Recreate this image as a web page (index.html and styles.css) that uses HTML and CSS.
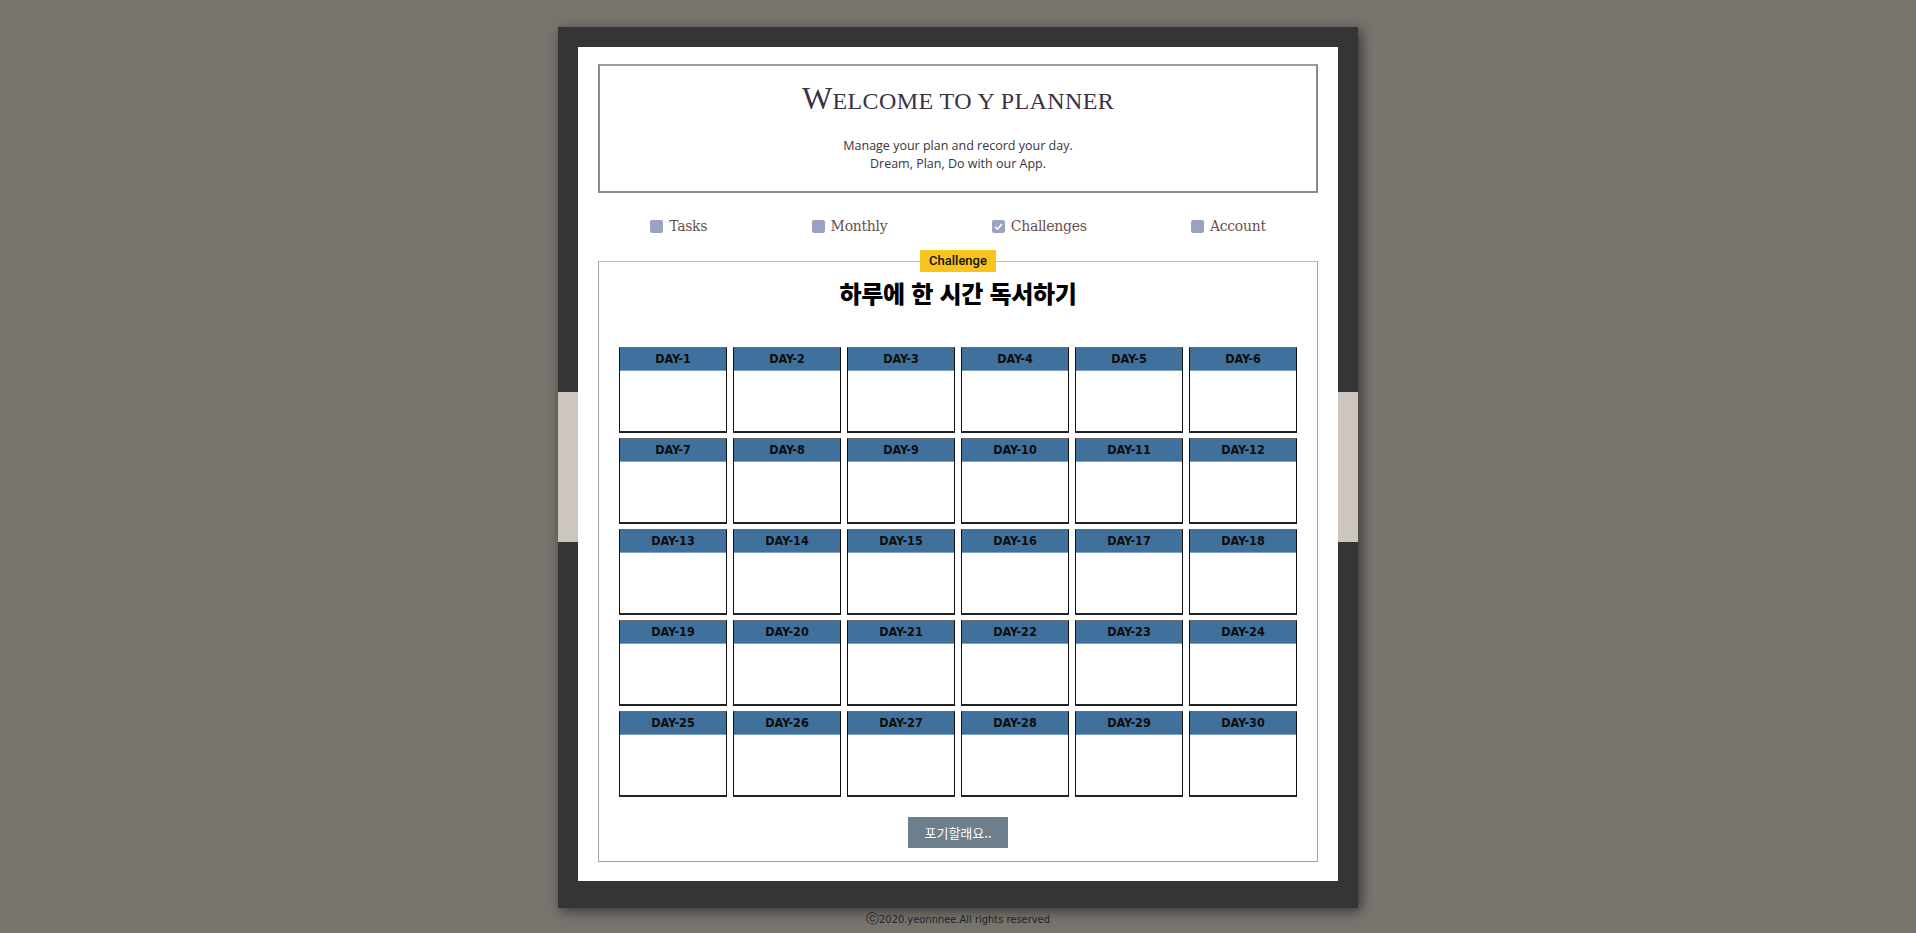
FILE: index.html
```html
<!DOCTYPE html>
<html lang="ko">
<head>
<meta charset="utf-8">
<title>Y Planner - Challenge</title>
<link rel="stylesheet" href="styles.css">
</head>
<body>
<div class="frame">
  <div class="paper">
    <header class="intro">
      <h1 class="intro-title">Welcome to Y planner</h1>
      <p class="intro-text">Manage your plan and record your day.<br>Dream, Plan, Do with our App.</p>
    </header>
    <nav class="menu">
      <label class="menu-item"><span class="box"></span>Tasks</label>
      <label class="menu-item"><span class="box"></span>Monthly</label>
      <label class="menu-item"><span class="box checked"><svg viewBox="0 0 13 13" width="13" height="13"><path d="M3 6.8 L5.4 9.2 L10 4" fill="none" stroke="#fff" stroke-width="1.6"/></svg></span>Challenges</label>
      <label class="menu-item"><span class="box"></span>Account</label>
    </nav>
    <fieldset class="challenge">
      <legend class="challenge-tag">Challenge</legend>
      <h2 class="challenge-title">하루에 한 시간 독서하기</h2>
      <div class="days">
        <div class="day"><div class="day-head">DAY-1</div></div>
        <div class="day"><div class="day-head">DAY-2</div></div>
        <div class="day"><div class="day-head">DAY-3</div></div>
        <div class="day"><div class="day-head">DAY-4</div></div>
        <div class="day"><div class="day-head">DAY-5</div></div>
        <div class="day"><div class="day-head">DAY-6</div></div>
        <div class="day"><div class="day-head">DAY-7</div></div>
        <div class="day"><div class="day-head">DAY-8</div></div>
        <div class="day"><div class="day-head">DAY-9</div></div>
        <div class="day"><div class="day-head">DAY-10</div></div>
        <div class="day"><div class="day-head">DAY-11</div></div>
        <div class="day"><div class="day-head">DAY-12</div></div>
        <div class="day"><div class="day-head">DAY-13</div></div>
        <div class="day"><div class="day-head">DAY-14</div></div>
        <div class="day"><div class="day-head">DAY-15</div></div>
        <div class="day"><div class="day-head">DAY-16</div></div>
        <div class="day"><div class="day-head">DAY-17</div></div>
        <div class="day"><div class="day-head">DAY-18</div></div>
        <div class="day"><div class="day-head">DAY-19</div></div>
        <div class="day"><div class="day-head">DAY-20</div></div>
        <div class="day"><div class="day-head">DAY-21</div></div>
        <div class="day"><div class="day-head">DAY-22</div></div>
        <div class="day"><div class="day-head">DAY-23</div></div>
        <div class="day"><div class="day-head">DAY-24</div></div>
        <div class="day"><div class="day-head">DAY-25</div></div>
        <div class="day"><div class="day-head">DAY-26</div></div>
        <div class="day"><div class="day-head">DAY-27</div></div>
        <div class="day"><div class="day-head">DAY-28</div></div>
        <div class="day"><div class="day-head">DAY-29</div></div>
        <div class="day"><div class="day-head">DAY-30</div></div>
      </div>
      <div class="actions"><button class="giveup">포기할래요..</button></div>
    </fieldset>
  </div>
</div>
<footer class="footer"><span class="copy">ⓒ</span>2020.yeonnnee.All rights reserved</footer>
</body>
</html>
```

FILE: styles.css
```css
html, body {
  margin: 0;
  padding: 0;
}
body {
  background: #78756f;
  font-family: "Open Sans", "Noto Sans CJK KR", sans-serif;
  min-height: 933px;
}
.frame {
  width: 760px;
  margin: 27px auto 0;
  padding: 20px 20px 27px;
  background: linear-gradient(to bottom, #353535 0, #353535 365px, #cdc6bf 365px, #cdc6bf 515px, #353535 515px, #353535 100%);
  box-shadow: 3px 3px 12px rgba(0, 0, 0, 0.55);
}
.paper {
  background: #fff;
  padding: 17px 20px 19px;
}
.intro {
  border: 2px solid #8a8a8a;
  border-top-color: #9c9c9c;
  text-align: center;
  padding: 14px 0 18px;
}
.intro-title {
  margin: 0;
  font-family: "Liberation Serif", serif;
  font-weight: normal;
  font-size: 24px;
  line-height: 36px;
  text-transform: uppercase;
  color: #3b3142;
  letter-spacing: 0.4px;
}
.intro-title::first-letter {
  font-size: 32px;
}
.intro-text {
  margin: 18px 0 0;
  font-size: 12.5px;
  line-height: 18px;
  color: #3a3340;
}
.menu {
  display: flex;
  justify-content: space-around;
  align-items: center;
  height: 22px;
  margin: 22px 0 13px;
}
.menu-item {
  display: flex;
  align-items: center;
  gap: 6px;
  font-family: "DejaVu Serif", serif;
  font-size: 14px;
  color: #6a4f4f;
  letter-spacing: -0.3px;
}
.box {
  display: block;
  width: 13px;
  height: 13px;
  border-radius: 2px;
  background: #9aa2bf;
}
.box svg {
  display: block;
}
.challenge {
  margin: 0;
  padding: 0 20px 13px;
  border: 1px solid #a3a3a3;
  border-top-color: #bdbdbd;
  min-width: 0;
}
.challenge-tag {
  margin: 0 auto;
  padding: 0 9px;
  height: 22px;
  line-height: 22px;
  background: #f7c51e;
  color: #111;
  font-family: Roboto, "Noto Sans", sans-serif;
  font-size: 13px;
  font-weight: 500;
}
.challenge-title {
  margin: 6px 0 39px;
  text-align: center;
  font-family: "Noto Sans CJK KR", sans-serif;
  font-weight: 900;
  font-size: 24px;
  line-height: 30px;
  color: #000;
  letter-spacing: -0.3px;
}
.days {
  display: grid;
  grid-template-columns: repeat(6, 1fr);
  grid-auto-rows: 86px;
  column-gap: 6px;
  row-gap: 5px;
}
.day {
  border: 1px solid #111;
  border-top-color: #6a6a6a;
  border-bottom: 2px solid #222;
  background: #fff;
}
.day-head {
  height: 22px;
  line-height: 21px;
  background: #40719c;
  border-bottom: 1px solid #7fa2c2;
  text-align: center;
  font-family: "DejaVu Sans Condensed", "DejaVu Sans", sans-serif;
  font-weight: bold;
  font-size: 12.5px;
  color: #0d0d0d;
}
.actions {
  display: flex;
  justify-content: center;
  margin-top: 20px;
}
.giveup {
  width: 100px;
  height: 31px;
  border: 0;
  padding: 0;
  background: #6d7e8d;
  color: #fff;
  font-family: "Noto Sans CJK KR", sans-serif;
  font-size: 13px;
}
.footer {
  text-align: center;
  margin-top: 1px;
  line-height: 20px;
  font-family: "DejaVu Sans Condensed", sans-serif;
  font-size: 11px;
  color: #222;
}
.copy {
  font-size: 13px;
}
```
